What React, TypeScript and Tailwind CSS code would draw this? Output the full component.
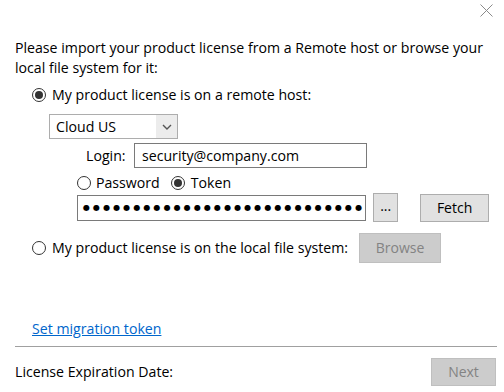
const font = "font-['Open_Sans',sans-serif]";

function Radio({ checked }: { checked?: boolean }) {
  return (
    <span className="flex h-[14px] w-[14px] shrink-0 items-center justify-center rounded-full border border-[#333333] bg-white">
      {checked && <span className="h-[8px] w-[8px] rounded-full bg-[#333333]" />}
    </span>
  );
}

function Button({
  label,
  disabled,
  className = "",
}: {
  label: string;
  disabled?: boolean;
  className?: string;
}) {
  return (
    <button
      className={`flex items-center justify-center border text-[14px] ${
        disabled
          ? "border-[#bfbfbf] bg-[#cccccc] text-[#838383]"
          : "border-[#adadad] bg-[#e1e1e1] text-black"
      } ${className}`}
    >
      {label}
    </button>
  );
}

export default function App() {
  return (
    <div className={`flex h-[392px] w-[504px] flex-col bg-white text-[14.15px] leading-[20px] text-black ${font}`}>
      <div className="flex h-[38px] justify-end pr-[11px] pt-[4px]">
        <svg width="13" height="13" viewBox="0 0 13 13" className="text-[#8a8a8a]">
          <path d="M0.5 0.5 L12.5 12.5 M12.5 0.5 L0.5 12.5" stroke="currentColor" strokeWidth="1" />
        </svg>
      </div>

      <div className="flex flex-1 flex-col px-[15px]">
        <p>
          Please import your product license from a Remote host or browse your
          local file system for it:
        </p>

        <label className="mt-[7px] ml-[17px] flex items-center gap-[6px]">
          <Radio checked />
          <span>My product license is on a remote host:</span>
        </label>

        <div className="mt-[9px] ml-[34px] flex h-[25px] w-[129px] items-center border border-[#adadad] bg-white">
          <span className="flex-1 pl-[6px]">Cloud US</span>
          <span className="flex h-full w-[21px] items-center justify-center bg-[#ececec]">
            <svg width="10" height="6" viewBox="0 0 10 6">
              <path d="M1 1 L5 5 L9 1" fill="none" stroke="#555555" strokeWidth="1.4" />
            </svg>
          </span>
        </div>

        <div className="mt-[4px] ml-[71px] flex items-center">
          <span className="w-[48px]">Login:</span>
          <div className="flex h-[25px] w-[233px] items-center border border-[#7a7a7a] pl-[7px]">
            security@company.com
          </div>
        </div>

        <div className="mt-[5px] ml-[62px] flex items-center">
          <label className="flex items-center gap-[5px]">
            <Radio />
            <span>Password</span>
          </label>
          <label className="ml-[11px] flex items-center gap-[6px]">
            <Radio checked />
            <span>Token</span>
          </label>
        </div>

        <div className="ml-[62px] flex h-[29px] items-center">
          <div className="flex h-[26px] w-[290px] items-center overflow-hidden border border-[#7a7a7a] pl-[5px] font-['DejaVu_Sans',sans-serif] text-[8px] leading-none tracking-[3.1px] whitespace-nowrap">
            {"●".repeat(33)}
          </div>
          <Button label="..." className="ml-[7px] h-[29px] w-[25px] pb-[4px]" />
          <Button label="Fetch" className="ml-[22px] h-[28px] w-[69px]" />
        </div>

        <div className="mt-[11px] ml-[17px] flex items-center">
          <label className="flex items-center gap-[6px]">
            <Radio />
            <span>My product license is on the local file system:</span>
          </label>
          <Button label="Browse" disabled className="ml-[11px] h-[30px] w-[82px]" />
        </div>

        <a className="mt-[56px] ml-[17px] self-start text-[#0066cc] underline">
          Set migration token
        </a>

        <div className="mt-[7px] mr-[-8px] h-px bg-[#a0a0a0]" />

        <div className="mt-[11px] flex items-center justify-between">
          <span>License Expiration Date:</span>
          <Button label="Next" disabled className="mr-[-7px] h-[28px] w-[65px]" />
        </div>
      </div>
    </div>
  );
}
